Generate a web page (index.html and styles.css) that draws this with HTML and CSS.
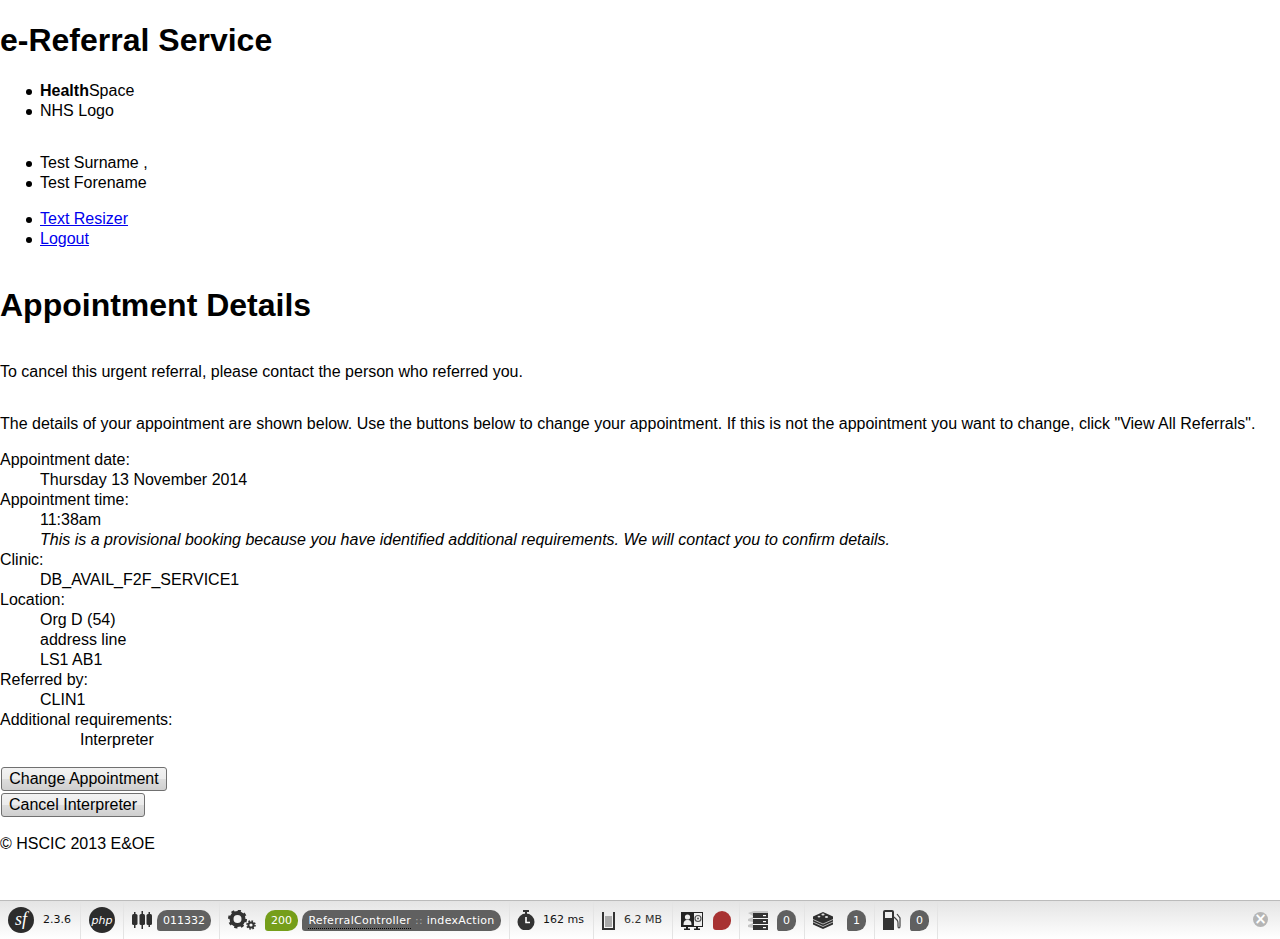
FILE: index.html

```html
<!DOCTYPE html>
<html lang="en">
<head>
  <meta charset="UTF-8">
  <title>Appointment Details</title>
  <link rel="stylesheet" href="styles.css">
</head>
<body>
  <div class="page">
    <h1>e-Referral Service</h1>
    <ul>
      <li><strong>Health</strong>Space</li>
      <li>NHS Logo</li>
    </ul>
    <ul class="patient">
      <li>Test Surname ,</li>
      <li>Test Forename</li>
    </ul>
    <ul>
      <li><a href="#">Text Resizer</a></li>
      <li><a href="#">Logout</a></li>
    </ul>
    <h1 class="title">Appointment Details</h1>
    <p class="cancel">To cancel this urgent referral, please contact the person who referred you.</p>
    <p class="intro">The details of your appointment are shown below. Use the buttons below to change your appointment. If this is not the appointment you want to change, click "View All Referrals".</p>
    <dl>
      <dt>Appointment date:</dt>
      <dd>Thursday 13 November 2014</dd>
      <dt>Appointment time:</dt>
      <dd>11:38am</dd>
      <dd><em>This is a provisional booking because you have identified additional requirements. We will contact you to confirm details.</em></dd>
      <dt>Clinic:</dt>
      <dd>DB_AVAIL_F2F_SERVICE1</dd>
      <dt>Location:</dt>
      <dd>Org D (54)</dd>
      <dd>address line</dd>
      <dd>LS1 AB1</dd>
      <dt>Referred by:</dt>
      <dd>CLIN1</dd>
      <dt>Additional requirements:</dt>
      <dd class="nested">Interpreter</dd>
    </dl>
    <div class="actions">
      <button type="button" class="change">Change Appointment</button>
      <button type="button">Cancel Interpreter</button>
    </div>
    <p class="copyright">© HSCIC 2013 E&amp;OE</p>
  </div>

  <div class="toolbar">
    <div class="block b-sf">
      <svg class="logo" viewBox="0 0 26 26"><circle cx="13" cy="13" r="13" fill="#2c2c2c"/><text x="13" y="18" text-anchor="middle" class="sf-mark">sf</text></svg>
      <span class="info">2.3.6</span>
    </div>
    <div class="block b-php">
      <svg class="logo" viewBox="0 0 26 26"><circle cx="13" cy="13" r="13" fill="#2c2c2c"/><text x="13" y="16.5" text-anchor="middle" class="php-mark">php</text></svg>
    </div>
    <div class="block b-tag">
      <svg class="ico-tag" viewBox="0 0 20 20" fill="#2f2f2f"><rect x="0" y="4" width="5.5" height="11" rx="1.5"/><rect x="2" y="2" width="1.5" height="16"/><rect x="7.5" y="4" width="5.5" height="11" rx="1.5"/><rect x="9.5" y="1" width="1.5" height="18"/><rect x="14.5" y="4" width="5.5" height="11" rx="1.5"/><rect x="16.5" y="2" width="1.5" height="15"/></svg>
      <span class="badge tag">011332</span>
    </div>
    <div class="block b-request">
      <svg class="ico-gear" viewBox="0 0 28 20">
        <g fill="none" stroke="#333">
          <circle cx="9.5" cy="9" r="6" stroke-width="4"/>
          <circle cx="9.5" cy="9" r="8" stroke-width="3" stroke-dasharray="3 3.28"/>
          <circle cx="23" cy="15" r="2.6" stroke-width="2"/>
          <circle cx="23" cy="15" r="4" stroke-width="1.6" stroke-dasharray="1.6 1.54"/>
        </g>
      </svg>
      <span class="badge status">200</span>
      <span class="badge route"><abbr>ReferralController</abbr> <span class="sep">::</span> indexAction</span>
    </div>
    <div class="block b-time">
      <svg class="ico-timer" viewBox="0 0 18 20"><rect x="6" y="0" width="6" height="2" fill="#333"/><rect x="8" y="1" width="2" height="3" fill="#333"/><circle cx="9" cy="12" r="8.5" fill="#333"/><path d="M9 7v5.5h4" fill="none" stroke="#fff" stroke-width="1.6"/></svg>
      <span class="info">162 ms</span>
    </div>
    <div class="block b-mem">
      <svg class="ico-mem" viewBox="0 0 13 19"><path d="M1 1v17h11V1" fill="none" stroke="#333" stroke-width="2"/><rect x="3" y="5" width="7" height="11" fill="#aaa"/></svg>
      <span class="info mem">6.2 MB</span>
    </div>
    <div class="block b-sec">
      <svg class="ico-sec" viewBox="0 0 22 19">
        <rect x="0" y="1" width="22" height="15" fill="#222"/>
        <rect x="13" y="2" width="8" height="13" fill="#eee"/>
        <circle cx="6.5" cy="6" r="2.6" fill="#eee"/>
        <path d="M2.5 14c0-4 1.5-5 4-5s4 1 4 5z" fill="#eee"/>
        <circle cx="17" cy="7.5" r="3" fill="none" stroke="#555" stroke-width="1.2"/>
        <circle cx="17" cy="7.5" r="1" fill="#555"/>
        <rect x="5" y="16" width="2" height="3" fill="#222"/>
        <rect x="15" y="16" width="2" height="3" fill="#222"/>
        <rect x="3" y="17.5" width="6" height="1.5" fill="#222"/>
        <rect x="13" y="17.5" width="6" height="1.5" fill="#222"/>
      </svg>
      <span class="red-dot"></span>
    </div>
    <div class="block b-db">
      <svg class="ico-db" viewBox="0 0 20 19">
        <path d="M0 2L6 0h14v5H5z" fill="#c4c4c4"/>
        <path d="M0 8l5-2v5l-5-1zM0 14l5-2v5l-5-1z" fill="#c4c4c4"/>
        <rect x="5" y="2" width="15" height="5" fill="#333"/>
        <rect x="5" y="8" width="15" height="5" fill="#333"/>
        <rect x="5" y="14" width="15" height="5" fill="#333"/>
        <rect x="15" y="4" width="3" height="1.2" fill="#fff"/>
        <rect x="15" y="10" width="3" height="1.2" fill="#fff"/>
        <rect x="15" y="16" width="3" height="1.2" fill="#fff"/>
      </svg>
      <span class="badge round">0</span>
    </div>
    <div class="block b-cache">
      <svg class="ico-cache" viewBox="0 0 20 17">
        <path d="M10 0l10 4.5v8L10 17 0 12.5v-8z" fill="#2f2f2f"/>
        <path d="M0 7.5l10 4.5 10-4.5M0 10l10 4.5L20 10" fill="none" stroke="#eee" stroke-width=".7"/>
        <ellipse cx="10" cy="2.6" rx="1.6" ry="1" fill="#ddd"/>
        <ellipse cx="6" cy="4.6" rx="1.4" ry=".9" fill="#ddd"/>
        <ellipse cx="13.5" cy="5" rx="1.6" ry="1" fill="#ddd"/>
      </svg>
      <span class="badge round">1</span>
    </div>
    <div class="block b-gas">
      <svg class="ico-gas" viewBox="0 0 18 20">
        <path d="M0 2Q0 0 2 0h7q2 0 2 2v18H0z" fill="#333"/>
        <rect x="2" y="2" width="7" height="6" fill="#eee"/>
        <path d="M11 7l3 3q1 1 1 3v3q0 2 1 2t1-2V8l-3-4" fill="none" stroke="#444" stroke-width="1.2"/>
      </svg>
      <span class="badge round">0</span>
    </div>
    <a class="close" href="#">×</a>
  </div>
</body>
</html>
```

FILE: styles.css

```css
html, body {
  height: 100%;
  margin: 0;
}
body {
  display: flex;
  flex-direction: column;
  font-family: "Liberation Sans", Arial, sans-serif;
  font-size: 16px;
  line-height: 20px;
  color: #000;
  background: #fff;
}
.page {
  flex: 1;
  overflow: hidden;
}
h1 {
  font-size: 32px;
  line-height: 37px;
  font-weight: bold;
  margin: 22px 0 22px;
}
ul {
  margin: 16px 0;
  padding-left: 40px;
  list-style: none;
}
li {
  position: relative;
}
li::before {
  content: "";
  position: absolute;
  left: -14px;
  top: 8px;
  width: 6px;
  height: 6px;
  border-radius: 50%;
  background: #000;
}
.patient {
  margin-top: 32px;
}
.title {
  margin-top: 38px;
  margin-bottom: 21px;
}
p {
  margin: 16px 0;
}
.cancel {
  margin-top: 38px;
}
.intro {
  margin-top: 32px;
}
dl {
  margin: 16px 0 0;
}
dd {
  margin-left: 40px;
}
.nested {
  margin-left: 80px;
}
.actions {
  display: flex;
  flex-direction: column;
  align-items: flex-start;
  gap: 2px;
  margin-top: 17px;
}
button {
  height: 24px;
  margin: 0 0 0 1px;
  padding: 0 7px;
  font-family: "Liberation Sans", Arial, sans-serif;
  font-size: 16px;
  color: #000;
  border: 1px solid #707070;
  border-radius: 3px;
  background: linear-gradient(#f2f2f2, #ebebeb 50%, #dddddd 50%, #cfcfcf);
}
.change {
  width: 166px;
}
.copyright {
  margin-top: 17px;
}

/* debug toolbar */
.toolbar {
  flex: none;
  display: flex;
  align-items: center;
  height: 38px;
  position: relative;
  border-top: 1px solid #bbb;
  background: linear-gradient(#e4e4e4, #fff);
  font-family: "DejaVu Sans", Verdana, sans-serif;
  font-size: 11px;
  color: #2f2f2f;
}
.block {
  display: flex;
  align-items: center;
  box-sizing: border-box;
  height: 38px;
  padding-left: 8px;
  border-right: 1px solid #e4e4e4;
}
.logo {
  width: 26px;
  height: 26px;
}
.sf-mark {
  font-family: "Liberation Serif", serif;
  font-style: italic;
  font-size: 18px;
  fill: #fff;
}
.php-mark {
  font-family: "DejaVu Sans", sans-serif;
  font-style: italic;
  font-size: 11px;
  fill: #fff;
}
.info {
  color: #111;
}
.mem {
  color: #2f2f2f;
}
.badge {
  box-sizing: border-box;
  height: 21px;
  line-height: 22px;
  text-align: center;
  color: #fff;
  background: #606060;
  border-radius: 10px 10px 10px 3px;
}
.b-sf { width: 81px; }
.b-sf .info { margin-left: 9px; }
.b-php { width: 43px; }
.b-tag { width: 96px; }
.ico-tag { width: 20px; height: 20px; }
.tag { width: 54px; margin-left: 5px; }
.b-request { width: 290px; }
.ico-gear { width: 28px; height: 20px; }
.status { width: 33px; margin-left: 9px; background: #759e1a; }
.route { width: 199px; margin-left: 4px; white-space: nowrap; letter-spacing: .3px; }
.route abbr { border-bottom: 1px dotted #000; padding-bottom: 1px; }
.sep { color: #aaa; }
.b-time { width: 84px; padding-left: 7px; }
.ico-timer { width: 18px; height: 20px; }
.b-time .info { margin-left: 8px; }
.b-mem { width: 79px; }
.ico-mem { width: 13px; height: 19px; }
.b-mem .info { margin-left: 9px; }
.b-sec { width: 67px; }
.ico-sec { width: 22px; height: 19px; }
.red-dot {
  width: 18px;
  height: 19px;
  margin-left: 10px;
  background: #a83232;
  border-radius: 9px 9px 9px 3px;
}
.b-db { width: 65px; }
.ico-db { width: 20px; height: 19px; }
.round { width: 19px; margin-left: 9px; }
.b-cache { width: 70px; }
.ico-cache { width: 20px; height: 17px; }
.b-cache .round { margin-left: 14px; }
.b-gas { width: 63px; }
.ico-gas { width: 18px; height: 20px; }
.close {
  position: absolute;
  left: 1253px;
  top: 11px;
  width: 15px;
  height: 15px;
  border-radius: 50%;
  background: #b5b5b5;
  color: #fff;
  font: bold 15px/15px "DejaVu Sans", sans-serif;
  text-align: center;
  text-decoration: none;
}
```
